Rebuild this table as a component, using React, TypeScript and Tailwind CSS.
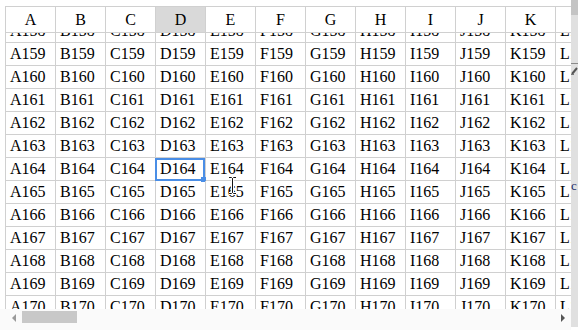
import React from "react";

const COLS = ["A", "B", "C", "D", "E", "F", "G", "H", "I", "J", "K", "L"];
const ROWS = Array.from({ length: 13 }, (_, i) => 158 + i);

function IBeam() {
  return (
    <svg
      className="absolute left-[227px] top-[176px]"
      width="11"
      height="19"
      viewBox="0 0 11 19"
    >
      <path
        d="M2 1.5h2.5l1 1 1-1H9M5.5 2.5v14M2 17.5h2.5l1-1 1 1H9"
        fill="none"
        stroke="#fff"
        strokeWidth="3"
      />
      <path
        d="M2 1.5h2.5l1 1 1-1H9M5.5 2.5v14M2 17.5h2.5l1-1 1 1H9"
        fill="none"
        stroke="#111"
        strokeWidth="1"
      />
    </svg>
  );
}

export default function App() {
  return (
    <div
      className="relative flex h-[330px] w-[578px] overflow-hidden bg-white text-black"
      style={{ fontFamily: '"Liberation Serif", "Times New Roman", serif' }}
    >
      <div className="flex w-[571px] flex-col">
        {/* sheet viewport */}
        <div className="h-[309px] shrink-0 overflow-hidden pl-[5px] pt-[6px]">
          {/* column headers */}
          <div className="flex w-max border-l border-t border-[#d0d0d0]">
            {COLS.map((c) => (
              <div
                key={c}
                className={`flex h-[26px] w-[50px] shrink-0 items-center justify-center border-b border-r border-[#d0d0d0] text-[16px] ${
                  c === "D" ? "bg-[#d9d9d9]" : "bg-white"
                }`}
              >
                {c}
              </div>
            ))}
          </div>
          {/* scrolled body */}
          <div className="h-[300px] overflow-hidden">
            <div className="-mt-[13px] w-max border-l border-[#d0d0d0]">
              {ROWS.map((r) => (
                <div key={r} className="flex">
                  {COLS.map((c) => {
                    const selected = c === "D" && r === 164;
                    return (
                      <div
                        key={c}
                        className="relative flex h-[23px] w-[50px] shrink-0 items-center whitespace-nowrap border-b border-r border-[#d0d0d0] pl-[4px] text-[16px] leading-none"
                      >
                        {c}
                        {r}
                        {selected && (
                          <div className="absolute -bottom-px -left-px right-0 top-0 border-2 border-[#4a8ee6]">
                            <div className="absolute -bottom-[3px] -right-[3px] h-[5px] w-[5px] bg-[#4a8ee6]" />
                          </div>
                        )}
                      </div>
                    );
                  })}
                </div>
              ))}
            </div>
          </div>
        </div>
        {/* horizontal scrollbar */}
        <div className="flex h-[21px] shrink-0 items-start bg-[#fafafa] pt-[2px]">
          <div className="ml-[12px] mt-[3px] h-0 w-0 border-y-[4px] border-r-[4px] border-y-transparent border-r-[#9a9a9a]" />
          <div className="ml-[6px] h-[12px] w-[55px] bg-[#c8c8c8]" />
          <div className="ml-auto mr-[6px] mt-[3px] h-0 w-0 border-y-[4px] border-l-[4px] border-y-transparent border-l-[#555]" />
        </div>
      </div>
      {/* vertical scrollbar strip */}
      <div className="relative flex h-[327px] w-[7px] flex-col bg-[#e0e0e0]">
        <div className="h-[15px] bg-[#c4c4c4]" />
        <div className="mt-[48px] h-px bg-[#8a8a8a]" />
        <svg className="mt-[2px]" width="7" height="9" viewBox="0 0 7 9">
          <path d="M1 8 6 2" stroke="#555" strokeWidth="2" />
          <path d="M0 8.5h3" stroke="#777" strokeWidth="1" />
        </svg>
        <span className="mt-[104px] text-[13px] leading-none text-[#1a2a6a]">c</span>
      </div>
      <IBeam />
    </div>
  );
}
